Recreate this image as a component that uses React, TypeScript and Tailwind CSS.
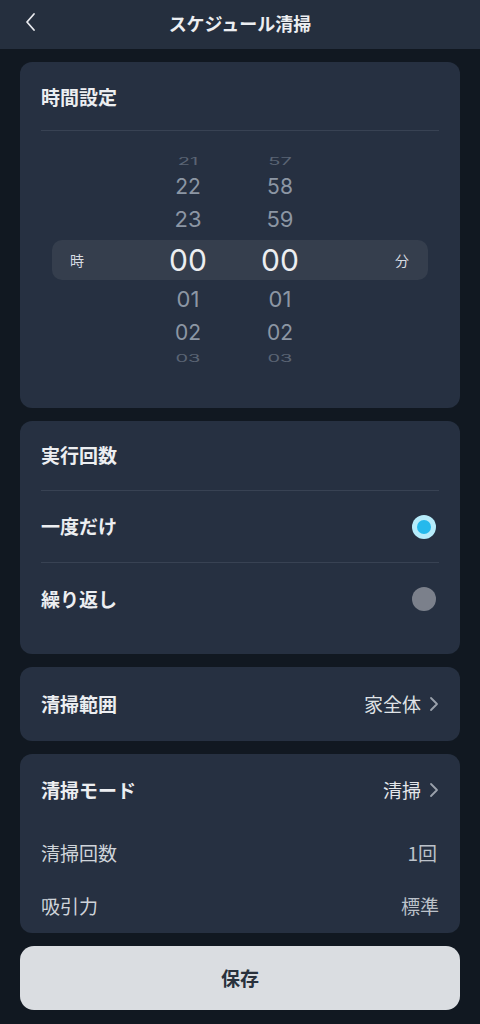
import React from "react";

const jp = { fontFamily: '"Noto Sans CJK JP", "Noto Sans", sans-serif' };
const num = { fontFamily: 'Inter, "Noto Sans", sans-serif' };

function Chevron({ className = "" }: { className?: string }) {
  return (
    <svg width="10" height="16" viewBox="0 0 10 16" className={className} fill="none">
      <path d="M2 2l6 6-6 6" stroke="currentColor" strokeWidth="1.8" strokeLinecap="round" strokeLinejoin="round" />
    </svg>
  );
}

function PickerRow({ h, m, cls, rowCls }: { h: string; m: string; cls: string; rowCls: string }) {
  return (
    <div className={`grid grid-cols-[106px_60px_32px_60px_1fr] items-center ${rowCls}`}>
      <div />
      <div className={`text-center ${cls}`} style={num}>{h}</div>
      <div />
      <div className={`text-center ${cls}`} style={num}>{m}</div>
      <div />
    </div>
  );
}

function Divider() {
  return <div className="h-px bg-[#384253]" />;
}

export default function App() {
  return (
    <div className="w-[480px] h-[1024px] bg-[#111821] text-[#eceef1] overflow-hidden" style={jp}>
      {/* Header */}
      <div className="relative h-[49px] bg-[#252f3e] flex items-center justify-center">
        <div className="absolute left-[23px] top-[12px] text-[#e8eaee]">
          <svg width="14" height="20" viewBox="0 0 14 20" fill="none">
            <path d="M11 2L4 10l7 8" stroke="currentColor" strokeWidth="1.8" strokeLinecap="round" strokeLinejoin="round" />
          </svg>
        </div>
        <div className="text-[18px] font-bold leading-none -mt-[4px]">スケジュール清掃</div>
      </div>

      <div className="px-[20px] pt-[13px] flex flex-col gap-[13px]">
        {/* Card 1: time */}
        <div className="bg-[#263041] rounded-[12px] px-[21px] pt-[24px] h-[346px]">
          <div className="text-[19px] font-bold leading-[22px]">時間設定</div>
          <div className="mt-[22px]"><Divider /></div>
          <div className="mt-[20px] px-[11px]">
            <PickerRow h="21" m="57" rowCls="h-[20px]" cls="text-[20px] leading-none text-[#7d8796] opacity-60 scale-y-50" />
            <PickerRow h="22" m="58" rowCls="h-[31px]" cls="text-[21px] leading-none text-[#8c96a4]" />
            <PickerRow h="23" m="59" rowCls="h-[34px]" cls="text-[22px] leading-none text-[#8c96a4]" />
            <div className="mt-[4px] h-[40px] rounded-[10px] bg-[#353e4d] grid grid-cols-[106px_60px_32px_60px_1fr] items-center">
              <div className="pl-[18px] text-[14px] text-[#d8dce2]">時</div>
              <div className="text-center text-[30px] leading-none text-[#eceef1]" style={num}>00</div>
              <div />
              <div className="text-center text-[30px] leading-none text-[#eceef1]" style={num}>00</div>
              <div className="text-right pr-[19px] text-[14px] text-[#d8dce2]">分</div>
            </div>
            <PickerRow h="01" m="01" rowCls="mt-[2px] h-[34px]" cls="text-[22px] leading-none text-[#8c96a4]" />
            <PickerRow h="02" m="02" rowCls="h-[32px]" cls="text-[21px] leading-none text-[#8c96a4]" />
            <PickerRow h="03" m="03" rowCls="h-[14px]" cls="text-[20px] leading-none text-[#7d8796] opacity-60 scale-y-50" />
          </div>
        </div>

        {/* Card 2: execution count */}
        <div className="bg-[#263041] rounded-[12px] px-[21px] h-[233px]">
          <div className="h-[69px] flex items-center">
            <div className="text-[19px] font-bold">実行回数</div>
          </div>
          <Divider />
          <div className="h-[71px] flex items-center justify-between">
            <div className="text-[19px] font-bold">一度だけ</div>
            <div className="w-[24px] h-[24px] rounded-full bg-[#b6ecfb] flex items-center justify-center mr-[3px]">
              <div className="w-[14px] h-[14px] rounded-full bg-[#25b9ec]" />
            </div>
          </div>
          <Divider />
          <div className="h-[72px] flex items-center justify-between">
            <div className="text-[19px] font-bold">繰り返し</div>
            <div className="w-[24px] h-[24px] rounded-full bg-[#7b808b] mr-[3px]" />
          </div>
        </div>

        {/* Card 3: cleaning range */}
        <div className="bg-[#263041] rounded-[12px] px-[21px] h-[74px] flex items-center justify-between">
          <div className="text-[19px] font-bold">清掃範囲</div>
          <div className="flex items-center gap-[8px]">
            <span className="text-[19px] text-[#dfe2e6]">家全体</span>
            <Chevron className="text-[#9aa1ab]" />
          </div>
        </div>

        {/* Card 4: cleaning mode */}
        <div className="bg-[#263041] rounded-[12px] px-[21px] h-[179px] pt-[18px]">
          <div className="h-[36px] flex items-center justify-between">
            <div className="text-[19px] font-bold">清掃モード</div>
            <div className="flex items-center gap-[8px]">
              <span className="text-[19px] text-[#e3e6ea]">清掃</span>
              <Chevron className="text-[#9aa1ab]" />
            </div>
          </div>
          <div className="mt-[31px] h-[28px] flex items-center justify-between">
            <div className="text-[19px] text-[#cfd4da]">清掃回数</div>
            <div className="text-[19px] text-[#bcc2ca] pr-[2px]">1回</div>
          </div>
          <div className="mt-[25px] h-[28px] flex items-center justify-between">
            <div className="text-[19px] text-[#cfd4da]">吸引力</div>
            <div className="text-[19px] text-[#bcc2ca]">標準</div>
          </div>
        </div>

        {/* Save */}
        <button className="h-[64px] rounded-[14px] bg-[#dadde1] flex items-center justify-center">
          <span className="text-[19px] font-bold text-[#29313c]">保存</span>
        </button>
      </div>
    </div>
  );
}
